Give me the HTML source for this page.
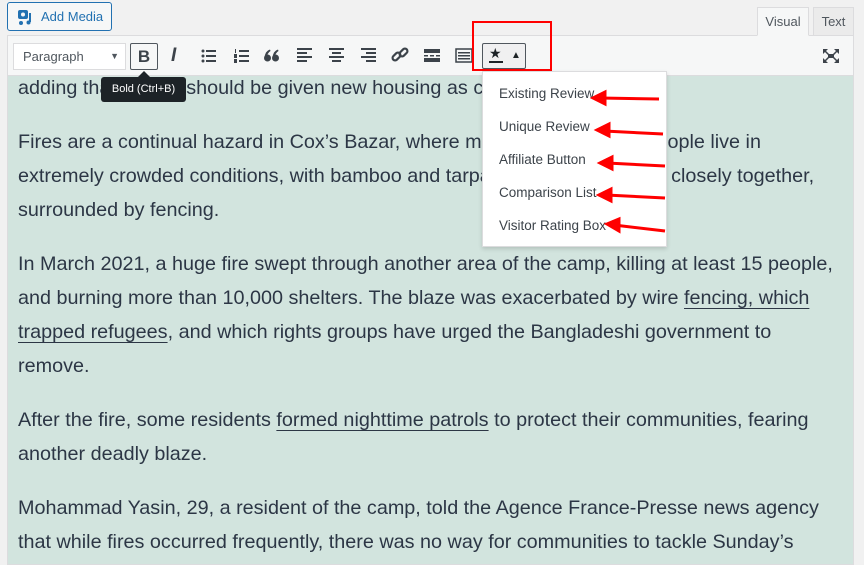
<!DOCTYPE html>
<html><head><meta charset="utf-8"><style>
*{margin:0;padding:0;box-sizing:border-box}
body{width:864px;height:558px;background:#f1f1f1;font-family:"Liberation Sans",sans-serif;position:relative;overflow:hidden}
.abs{position:absolute}
.btnmedia{left:7px;top:2px;width:105px;height:29px;border:1px solid #2271b1;border-radius:3px;background:#f6f7f7;color:#2271b1;font-size:13px;line-height:27px;padding-left:33px}
.tab{top:7px;height:29px;border:1px solid #dcdcde;background:#f6f7f7;font-size:13px;color:#50575e;line-height:27px;text-align:center}
.editor{left:7px;top:35px;width:847px;height:530px;border:1px solid #dcdcde;background:#d2e4de}
.toolbar{left:8px;top:36px;width:845px;height:40px;background:#f6f7f7;border-bottom:1px solid #dcdcde}
.sel{left:13px;top:43px;width:113px;height:27px;border:1px solid #dcdcde;background:#fff;font-size:13px;color:#50575e;line-height:25px;padding-left:9px}
.ic{top:46px;color:#3c434a;font-size:17px}
.txt{left:18px;font-size:19.8px;color:#2c3645;white-space:nowrap;line-height:34px}
.u{text-decoration:underline;text-decoration-thickness:1px;text-underline-offset:4px}
.menu{left:482px;top:71px;width:185px;height:176px;background:#fff;border:1px solid #dcdcde;box-shadow:0 2px 4px rgba(0,0,0,.15)}
.mi{left:499px;font-size:13.5px;color:#3c434a}
</style></head><body>
<div class="abs btnmedia"><svg class="abs" style="left:9px;top:6px" width="18" height="17" viewBox="0 0 18 17"><rect x="1" y="1" width="10" height="9" rx="2" fill="#2271b1"/><circle cx="6" cy="5.5" r="2" fill="#f6f7f7"/><path d="M13 4v9" stroke="#2271b1" stroke-width="2"/><circle cx="11.5" cy="13.5" r="2" fill="#2271b1"/><circle cx="4" cy="14" r="2" fill="#2271b1"/></svg>Add Media</div>
<div class="abs tab" style="left:757px;width:52px;background:#f6f7f7;border-bottom-color:#f6f7f7;z-index:3">Visual</div>
<div class="abs tab" style="left:813px;width:41px;background:#ebebeb">Text</div>
<div class="abs editor"></div>
<div class="abs toolbar"></div>
<div class="abs sel">Paragraph<span class="abs" style="right:6px;top:0;font-size:9px">▼</span></div>
<div class="abs" style="left:130px;top:43px;width:28px;height:27px;border:1px solid #50575e;border-radius:2px;font-weight:bold;font-size:17px;color:#3c434a;text-align:center;line-height:25px">B</div>
<div class="abs ic" style="left:171px;font-style:italic;font-weight:bold;font-size:19px;top:45px">I</div>
<svg class="abs" style="left:201px;top:49px" width="16" height="14"><g fill="#3c434a"><circle cx="2" cy="2" r="1.5"/><circle cx="2" cy="7" r="1.5"/><circle cx="2" cy="12" r="1.5"/><rect x="5" y="1" width="10" height="2"/><rect x="5" y="6" width="10" height="2"/><rect x="5" y="11" width="10" height="2"/></g></svg>
<svg class="abs" style="left:234px;top:49px" width="16" height="14"><g fill="#3c434a"><rect x="5" y="1" width="10" height="2"/><rect x="5" y="6" width="10" height="2"/><rect x="5" y="11" width="10" height="2"/><rect x="1" y="0" width="1" height="4"/><rect x="0" y="5" width="3" height="4"/><rect x="0" y="10" width="3" height="4"/></g></svg>
<svg class="abs" style="left:264px;top:49px" width="16" height="13"><g fill="#3c434a"><circle cx="3.5" cy="9" r="3.5"/><circle cx="11.5" cy="9" r="3.5"/><path d="M0.5 9Q1 2 6 0.5L6.5 2Q3 4 3 9z"/><path d="M8.5 9Q9 2 14 0.5L14.5 2Q11 4 11 9z"/></g></svg>
<svg class="abs" style="left:297px;top:48px" width="16" height="15"><g fill="#3c434a"><rect x="0" y="0" width="15" height="2"/><rect x="0" y="4" width="10" height="2"/><rect x="0" y="8" width="15" height="2"/><rect x="0" y="12" width="10" height="2"/></g></svg>
<svg class="abs" style="left:329px;top:48px" width="16" height="15"><g fill="#3c434a"><rect x="0" y="0" width="15" height="2"/><rect x="3" y="4" width="9" height="2"/><rect x="0" y="8" width="15" height="2"/><rect x="3" y="12" width="9" height="2"/></g></svg>
<svg class="abs" style="left:361px;top:48px" width="16" height="15"><g fill="#3c434a"><rect x="0" y="0" width="15" height="2"/><rect x="5" y="4" width="10" height="2"/><rect x="0" y="8" width="15" height="2"/><rect x="5" y="12" width="10" height="2"/></g></svg>
<svg class="abs" style="left:391px;top:46px" width="18" height="18"><g fill="none" stroke="#3c434a" stroke-width="2.2"><rect x="1" y="8" width="9" height="5" rx="2.5" transform="rotate(-45 5.5 10.5)"/><rect x="8" y="4" width="9" height="5" rx="2.5" transform="rotate(-45 12.5 6.5)"/></g></svg>
<svg class="abs" style="left:424px;top:49px" width="16" height="13"><g fill="#3c434a"><rect x="0" y="0" width="16" height="4"/><rect x="0" y="6" width="4" height="1.5"/><rect x="6" y="6" width="4" height="1.5"/><rect x="12" y="6" width="4" height="1.5"/><rect x="0" y="9" width="16" height="4"/></g></svg>
<svg class="abs" style="left:455px;top:48px" width="18" height="15"><g fill="none" stroke="#3c434a" stroke-width="1.5"><rect x="1" y="1" width="16" height="13"/></g><g fill="#3c434a"><rect x="3" y="4" width="12" height="1.5"/><rect x="3" y="7" width="12" height="1.5"/><rect x="3" y="10" width="12" height="1.5"/></g></svg>
<div class="abs" style="left:482px;top:43px;width:44px;height:26px;border:1px solid #50575e;border-radius:2px;background:#f0f0f1"><span class="abs" style="left:6px;top:1px;font-size:14px;color:#1d2327">★</span><span class="abs" style="left:6px;top:17px;width:14px;height:2px;background:#1d2327"></span><span class="abs" style="left:28px;top:6px;font-size:10px;color:#1d2327">▲</span></div>
<div class="abs" style="left:472px;top:21px;width:80px;height:50px;border:2px solid #f00"></div>
<svg class="abs" style="left:822px;top:48px" width="18" height="16"><g fill="#3c434a"><path d="M1 1h5l-5 5zM17 1h-5l5 5zM1 15h5l-5-5zM17 15h-5l5-5z"/><rect x="6" y="6" width="6" height="4"/><path d="M2 2l5 5M16 2l-5 5M2 14l5-5M16 14l-5-5" stroke="#3c434a" stroke-width="1.5"/></g></svg>

<div class="abs txt" style="top:71px">adding that people should be given new housing as c</div>
<div class="abs" style="left:101px;top:77px;width:85px;height:25px;background:#1d2327;border-radius:3px;color:#fff;font-size:11px;line-height:25px;text-align:center">Bold (Ctrl+B)</div>
<div class="abs" style="left:138px;top:71px;width:0;height:0;border:6px solid transparent;border-bottom-color:#1d2327;border-top:0"></div>
<div class="abs txt" style="top:125px">Fires are a continual hazard in Cox’s Bazar, where most of the 900,000 people live in</div>
<div class="abs txt" style="top:159px">extremely crowded conditions, with bamboo and tarpaulin shelters packed closely together,</div>
<div class="abs txt" style="top:193px">surrounded by fencing.</div>
<div class="abs txt" style="top:247px">In March 2021, a huge fire swept through another area of the camp, killing at least 15 people,</div>
<div class="abs txt" style="top:281px">and burning more than 10,000 shelters. The blaze was exacerbated by wire <span class="u">fencing, which</span></div>
<div class="abs txt" style="top:315px"><span class="u">trapped refugees</span>, and which rights groups have urged the Bangladeshi government to</div>
<div class="abs txt" style="top:349px">remove.</div>
<div class="abs txt" style="top:403px">After the fire, some residents <span class="u">formed nighttime patrols</span> to protect their communities, fearing</div>
<div class="abs txt" style="top:437px">another deadly blaze.</div>
<div class="abs txt" style="top:491px">Mohammad Yasin, 29, a resident of the camp, told the Agence France-Presse news agency</div>
<div class="abs txt" style="top:525px">that while fires occurred frequently, there was no way for communities to tackle Sunday’s</div>
<div class="abs" style="left:853px;top:36px;width:11px;height:522px;background:#f1f1f1;border-left:1px solid #dcdcde"></div>

<div class="abs menu"></div>
<div class="abs mi" style="top:86px">Existing Review</div>
<div class="abs mi" style="top:119px">Unique Review</div>
<div class="abs mi" style="top:152px">Affiliate Button</div>
<div class="abs mi" style="top:185px">Comparison List</div>
<div class="abs mi" style="top:218px">Visitor Rating Box</div>
<svg class="abs" style="left:590px;top:80px" width="80" height="160"><g stroke="#f00" stroke-width="3" fill="#f00"><line x1="10" y1="18" x2="69" y2="19"/><path d="M3 18l12-6v12z"/><line x1="14" y1="51" x2="73" y2="54"/><path d="M7 50l12-6v12z"/><line x1="17" y1="83" x2="75" y2="86"/><path d="M10 83l12-6v12z"/><line x1="16" y1="115" x2="75" y2="118"/><path d="M9 115l12-6v12z"/><line x1="24" y1="145" x2="75" y2="151"/><path d="M17 144l12-5v12z"/></g></svg>
</body></html>
